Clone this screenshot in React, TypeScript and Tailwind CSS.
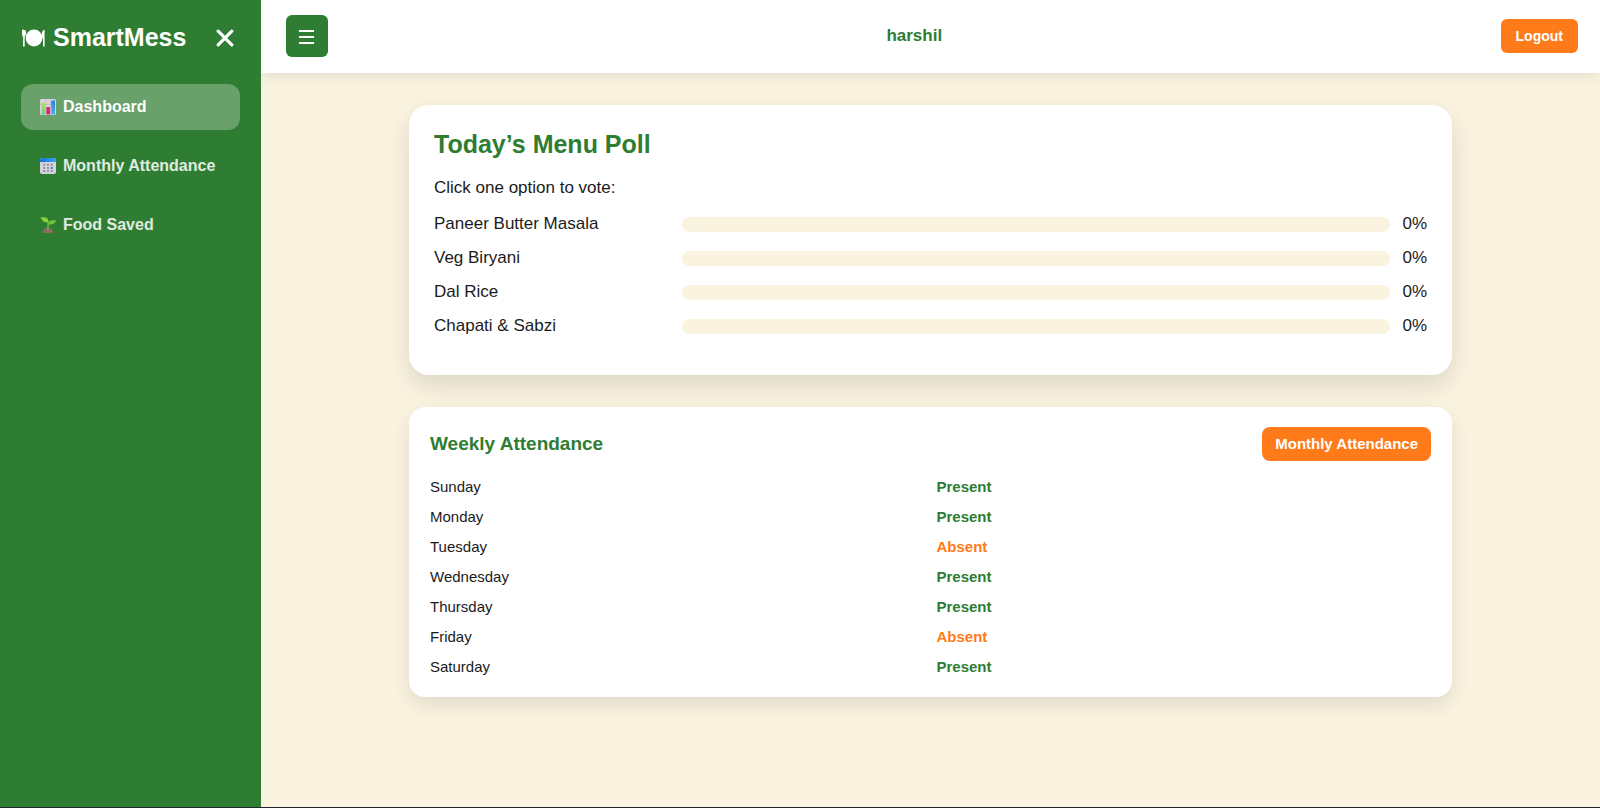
import { useState } from 'react';
import type { ReactNode } from 'react';

const PlateIcon = () => (
  <svg width="24" height="18" viewBox="0 0 24 18" fill="#fff" aria-hidden="true">
    <circle cx="13" cy="9" r="8.400" />
    <path d="M1 1.200C1.200.6 2 .4 2.500.8L4.800 1.500 5.200 4.800 3.700 7.500V17.400H2L2.200 8C1.300 7 .8 5.500 1 1.200z" />
    <path d="M20.800 4.500C21 2.500 22 .8 23.600.7V17.400H22V9.500L20.800 9z" />
  </svg>
);

const ChartIcon = () => (
  <svg width="16" height="16" viewBox="0 0 16 16" aria-hidden="true">
    <defs>
      <linearGradient id="barGreen" x1="0" y1="0" x2="0" y2="1">
        <stop offset="0" stopColor="#b4e84f" />
        <stop offset="1" stopColor="#5fd0a0" />
      </linearGradient>
      <linearGradient id="barBlue" x1="0" y1="0" x2="0" y2="1">
        <stop offset="0" stopColor="#1f84e0" />
        <stop offset="1" stopColor="#58a8f5" />
      </linearGradient>
    </defs>
    <rect width="16" height="16" rx="1.500" fill="#d9d3e0" />
    <path d="M0 5.500h16M5.700 0v16M10.700 0v16" stroke="#b7aec3" strokeWidth=".6" />
    <rect x="1.500" y="3.500" width="3.700" height="12" rx=".6" fill="url(#barGreen)" />
    <rect x="6.300" y="8" width="3.800" height="7.500" rx=".6" fill="#e0286c" />
    <rect x="11.300" y="1.500" width="3.700" height="14" rx=".6" fill="url(#barBlue)" />
  </svg>
);

const CalendarIcon = () => (
  <svg width="16" height="16" viewBox="0 0 16 16" aria-hidden="true">
    <defs>
      <linearGradient id="calendarTop" x1="0" y1="0" x2="1" y2="0">
        <stop offset="0" stopColor="#1673dc" />
        <stop offset="1" stopColor="#33a5f2" />
      </linearGradient>
    </defs>
    <rect width="16" height="16" rx="2" fill="#d5d2de" />
    <path d="M0 4V2a2 2 0 0 1 2-2h12a2 2 0 0 1 2 2v2z" fill="url(#calendarTop)" />
    <g fill="#9490a0">
      <rect x="3.200" y="5.700" width="2" height="2" rx=".4" />
      <rect x="7" y="5.700" width="2" height="2" rx=".4" />
      <rect x="10.800" y="5.700" width="2" height="2" rx=".4" />
      <rect x="3.200" y="8.900" width="2" height="2" rx=".4" />
      <rect x="7" y="8.900" width="2" height="2" rx=".4" />
      <rect x="3.200" y="12.100" width="2" height="2" rx=".4" />
      <rect x="7" y="12.100" width="2" height="2" rx=".4" />
      <rect x="10.800" y="12.100" width="2" height="2" rx=".4" />
    </g>
    <rect x="10.800" y="8.900" width="2" height="2" rx=".4" fill="#1587dc" />
  </svg>
);

const SeedlingIcon = () => (
  <svg width="16" height="16" viewBox="0 0 16 16" aria-hidden="true">
    <path d="M2.500 16c0-2.900 2.400-4.900 5.300-4.900s5.300 2 5.300 4.900z" fill="#8d6b60" />
    <path d="M8 12.500V5" stroke="#7cc142" strokeWidth="1.300" fill="none" />
    <path d="M8 5.300C5.500 5.500 2.500 5 1.700 1.700L0 .8C3.500-.4 8.300-.2 8.500 4.500z" fill="#8bd03f" />
    <path d="M8 7.500C7.700 4.500 10 2.800 16 3.300c-.8 3.400-3.500 4.700-8 4.200z" fill="#74c43a" />
  </svg>
);

const navItems: { label: string; icon: ReactNode }[] = [
  { label: 'Dashboard', icon: <ChartIcon /> },
  { label: 'Monthly Attendance', icon: <CalendarIcon /> },
  { label: 'Food Saved', icon: <SeedlingIcon /> },
];

const pollOptions = [
  { name: 'Paneer Butter Masala', percent: 0 },
  { name: 'Veg Biryani', percent: 0 },
  { name: 'Dal Rice', percent: 0 },
  { name: 'Chapati & Sabzi', percent: 0 },
];

const attendance = [
  { day: 'Sunday', status: 'Present' },
  { day: 'Monday', status: 'Present' },
  { day: 'Tuesday', status: 'Absent' },
  { day: 'Wednesday', status: 'Present' },
  { day: 'Thursday', status: 'Present' },
  { day: 'Friday', status: 'Absent' },
  { day: 'Saturday', status: 'Present' },
];

const Sidebar = ({ onClose }: { onClose: () => void }) => (
  <aside className="z-10 w-[261px] shrink-0 bg-[#2e7d32] px-[21px] pt-5 text-white">
    <div className="flex h-9 items-center justify-between pr-[6px]">
      <h2 className="flex items-center gap-2 text-[25px] font-bold">
        <PlateIcon />
        SmartMess
      </h2>
      <button type="button" aria-label="Close sidebar" onClick={onClose}>
        <svg width="18" height="18" viewBox="0 0 18 18" aria-hidden="true">
          <path d="M2.200 2.200l13.600 13.600M15.800 2.200L2.200 15.800" stroke="#fff" strokeWidth="3.200" strokeLinecap="round" />
        </svg>
      </button>
    </div>

    <nav className="mt-7 flex flex-col gap-[13px]">
      {navItems.map((item, i) => (
        <a
          key={item.label}
          href="#"
          className={`flex h-[46px] items-center gap-[7px] rounded-xl px-[19px] text-base font-bold whitespace-nowrap ${
            i === 0 ? 'bg-white/28 text-white' : 'text-white/85'
          }`}
        >
          {item.icon}
          {item.label}
        </a>
      ))}
    </nav>
  </aside>
);

const MenuPoll = () => (
  <section className="rounded-[20px] bg-white px-[25px] pt-[23px] pb-8 shadow-[0_10px_25px_rgba(0,0,0,0.12)]">
    <h2 className="text-[25px] leading-8 font-bold text-[#2e7d32]">Today’s Menu Poll</h2>
    <p className="mt-4 mb-[7px] text-[17px] leading-6">Click one option to vote:</p>
    {pollOptions.map((option) => (
      <button
        key={option.name}
        type="button"
        className="flex h-[34px] w-full cursor-pointer items-center gap-3 text-left text-[17px]"
      >
        <span className="w-[236px] shrink-0">{option.name}</span>
        <span className="h-[15px] flex-1 overflow-hidden rounded-full bg-[#faf3e0]">
          <span className="block h-full bg-[#2e7d32]" style={{ width: `${option.percent}%` }} />
        </span>
        <span>{option.percent}%</span>
      </button>
    ))}
  </section>
);

const WeeklyAttendance = () => (
  <section className="rounded-[16px] bg-white px-[21px] pt-5 pb-[15px] shadow-[0_8px_20px_rgba(0,0,0,0.1)]">
    <div className="mb-[11px] flex items-center justify-between">
      <h3 className="text-[19px] font-bold text-[#2e7d32]">Weekly Attendance</h3>
      <button
        type="button"
        className="h-[34px] rounded-lg bg-[#ff7a18] px-[13px] text-[15px] font-bold text-white"
      >
        Monthly Attendance
      </button>
    </div>
    <table className="w-full table-fixed text-[15px]">
      <tbody>
        {attendance.map(({ day, status }) => (
          <tr key={day} className="h-[30px]">
            <td>{day}</td>
            <td
              className={`pl-[6px] font-bold ${
                status === 'Present' ? 'text-[#2e7d32]' : 'text-[#ff7a18]'
              }`}
            >
              {status}
            </td>
          </tr>
        ))}
      </tbody>
    </table>
  </section>
);

export default function App() {
  const [sidebarOpen, setSidebarOpen] = useState(true);

  return (
    <div className="flex min-h-screen border-b border-[#222631] bg-[#faf3e0] font-['Liberation_Sans',Arial,sans-serif] text-[#1b1b1b]">
      {sidebarOpen && <Sidebar onClose={() => setSidebarOpen(false)} />}

      <div className="min-w-0 flex-1">
        <header className="flex h-[73px] items-center justify-between bg-white pr-[22px] pb-px pl-[25px] shadow-[0_4px_12px_rgba(0,0,0,0.08)]">
          <button
            type="button"
            aria-label="Toggle sidebar"
            onClick={() => setSidebarOpen(!sidebarOpen)}
            className="flex size-[42px] items-center justify-center rounded-md bg-[#2e7d32]"
          >
            <svg width="16" height="16" viewBox="0 0 16 16" aria-hidden="true">
              <path d="M0 3h15M0 9h15M0 15h15" stroke="#fff" strokeWidth="2" />
            </svg>
          </button>
          <span className="text-[17px] font-bold text-[#2e7d32]">harshil</span>
          <button
            type="button"
            className="h-[34px] rounded-md bg-[#ff7a18] px-[15px] text-sm font-bold text-white"
          >
            Logout
          </button>
        </header>

        <main className="mx-auto flex w-full max-w-[1043px] flex-col gap-8 py-8">
          <MenuPoll />
          <WeeklyAttendance />
        </main>
      </div>
    </div>
  );
}
